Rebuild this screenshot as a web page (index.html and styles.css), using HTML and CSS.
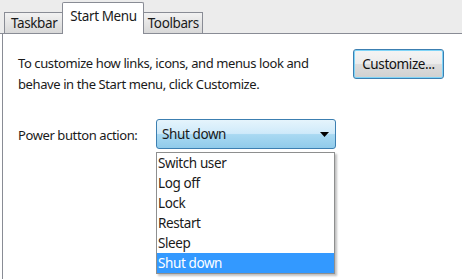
FILE: index.html
```html
<!DOCTYPE html>
<html>
<head>
<meta charset="utf-8">
<link rel="stylesheet" href="styles.css">
</head>
<body>
<div class="dialog">
  <div class="tabs">
    <div class="tab">Taskbar</div>
    <div class="tab active">Start Menu</div>
    <div class="tab">Toolbars</div>
  </div>
  <div class="panel">
    <div class="top-row">
      <p class="desc">To customize how links, icons, and menus look and<br>behave in the Start menu, click Customize.</p>
      <button class="btn">Customize...</button>
    </div>
    <div class="power-row">
      <span class="label">Power button action:</span>
      <div class="combo-wrap">
        <div class="combo">
          <span>Shut down</span>
          <svg class="arrow" width="9" height="5" viewBox="0 0 9 5"><path d="M0 0H9L4.5 5Z" fill="#000"/></svg>
        </div>
        <ul class="list">
          <li>Switch user</li>
          <li>Log off</li>
          <li>Lock</li>
          <li>Restart</li>
          <li>Sleep</li>
          <li class="sel">Shut down</li>
        </ul>
      </div>
    </div>
  </div>
</div>
</body>
</html>
```
FILE: styles.css
```css
html, body {
  margin: 0;
  padding: 0;
  width: 462px;
  height: 279px;
  overflow: hidden;
  background: #fff;
  font-family: "Noto Sans", "Open Sans", sans-serif;
  font-size: 13px;
  letter-spacing: -0.4px;
  color: #1a1a1a;
}
.dialog {
  display: flex;
  flex-direction: column;
  height: 279px;
}
.tabs {
  display: flex;
  align-items: flex-end;
  height: 34px;
  padding-left: 4px;
  background: #ececec;
  border-bottom: 1px solid #898c95;
  box-sizing: border-box;
}
.tab {
  height: 21px;
  line-height: 20px;
  padding: 0 5px 0 6px;
  box-sizing: border-box;
  border: 1px solid #898c95;
  border-bottom: none;
  border-right: none;
  background: linear-gradient(#f2f2f2, #d8d8d8);
  font-size: 13.5px;
}
.tab:last-child {
  border-right: 1px solid #898c95;
  padding: 0 3px 0 4px;
}
.tab.active {
  height: 32px;
  line-height: 26px;
  background: #fff;
  padding: 0 6px 0 7px;
  border-right: 1px solid #898c95;
  margin-bottom: -1px;
  border-radius: 2px 2px 0 0;
}
.tab.active + .tab { border-left: none; }
.panel {
  flex: 1;
  margin-left: 2px;
  border-left: 1px solid #898c95;
  background: #fff;
  padding: 14px 0 0 15px;
  position: relative;
}
.top-row {
  display: flex;
  align-items: flex-start;
}
.desc {
  margin: 5px 0 0 0;
  line-height: 21px;
  width: 335px;
}
.btn {
  margin-top: 1px;
  width: 91px;
  height: 30px;
  font-family: inherit;
  font-size: 13.5px;
  letter-spacing: -0.4px;
  color: #111;
  border: 1px solid #3c7fb1;
  border-radius: 3px;
  background: linear-gradient(#f4f4f4 0%, #ececec 48%, #dcdcdc 52%, #d0d0d0 100%);
  box-shadow: inset 0 0 0 1px #7fd4f7;
  padding: 0;
}
.power-row {
  display: flex;
  align-items: center;
  margin-top: 25px;
}
.label {
  width: 138px;
}
.combo-wrap {
  position: relative;
}
.combo {
  width: 180px;
  height: 30px;
  margin-top: -1px;
  box-sizing: border-box;
  border: 1px solid #3c7fb1;
  border-radius: 3px;
  background: linear-gradient(#e5f4fc 0%, #cfeafa 48%, #a9d9f2 52%, #90cbeb 100%);
  display: flex;
  align-items: center;
  justify-content: space-between;
  padding: 0 6px 0 5px;
  font-size: 13.5px;
}
.arrow { margin-top: 1px; }
.list {
  position: absolute;
  top: 32px;
  left: 0;
  width: 179px;
  margin: 0;
  padding: 0;
  list-style: none;
  background: #fff;
  border: 1px solid #8e8f8f;
  box-sizing: border-box;
  box-shadow: 2px 2px 2px rgba(0,0,0,0.25);
}
.list li {
  height: 20px;
  line-height: 21px;
  padding-left: 1px;
  font-size: 13.5px;
}
.list li.sel {
  background: #3399ff;
  color: #fff;
}
```
